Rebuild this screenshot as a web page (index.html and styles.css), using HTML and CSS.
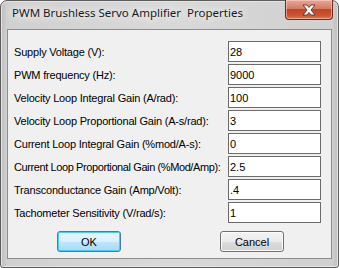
FILE: index.html
```html
<!DOCTYPE html>
<html lang="en">
<head>
    <meta charset="UTF-8">
    <title>PWM Brushless Servo Amplifier Properties</title>
    <link rel="stylesheet" href="styles.css">
</head>
<body>
    <div class="window">
        <div class="titlebar">
            <span class="title">PWM Brushless Servo Amplifier&nbsp; Properties</span>
            <button class="close-btn" aria-label="Close">
                <svg viewBox="0 0 16 12" width="16" height="12">
                    <path d="M2 1h4l2 2.5L10 1h4l-4 5 4 5h-4l-2-2.5L6 11H2l4-5z" fill="#fff" stroke="#5a3028" stroke-width="0.9" stroke-linejoin="round"/>
                </svg>
            </button>
        </div>
        <div class="client">
            <div class="fields">
                <div class="row">
                    <label class="label">Supply Voltage (V):</label>
                    <input class="field" type="text" value="28">
                </div>
                <div class="row">
                    <label class="label">PWM frequency (Hz):</label>
                    <input class="field" type="text" value="9000">
                </div>
                <div class="row">
                    <label class="label">Velocity Loop Integral Gain (A/rad):</label>
                    <input class="field" type="text" value="100">
                </div>
                <div class="row">
                    <label class="label">Velocity Loop Proportional Gain (A-s/rad):</label>
                    <input class="field" type="text" value="3">
                </div>
                <div class="row">
                    <label class="label">Current Loop Integral Gain (%mod/A-s):</label>
                    <input class="field" type="text" value="0">
                </div>
                <div class="row">
                    <label class="label label-tight">Current Loop Proportional Gain (%Mod/Amp):</label>
                    <input class="field" type="text" value="2.5">
                </div>
                <div class="row">
                    <label class="label">Transconductance Gain (Amp/Volt):</label>
                    <input class="field" type="text" value=".4">
                </div>
                <div class="row">
                    <label class="label">Tachometer Sensitivity (V/rad/s):</label>
                    <input class="field" type="text" value="1">
                </div>
            </div>
            <div class="buttons">
                <button class="btn btn-default">OK</button>
                <button class="btn">Cancel</button>
            </div>
        </div>
    </div>
</body>
</html>
```

FILE: styles.css
```css
* {
    margin: 0;
    padding: 0;
    box-sizing: border-box;
}

body {
    width: 339px;
    height: 268px;
    overflow: hidden;
    background: #fff;
}

.window {
    width: 339px;
    height: 268px;
    border: 1px solid #5c5c5c;
    border-radius: 7px 7px 3px 3px;
    background: linear-gradient(to right, #bdbdbd 0, #d0d0d0 6px, #d9d9d9 50%, #d0d0d0 calc(100% - 6px), #bdbdbd 100%);
    box-shadow: inset 0 0 0 1px #e6e6e6;
    display: flex;
    flex-direction: column;
    padding: 0 6px 8px 6px;
}

/* Title bar */
.titlebar {
    height: 28px;
    position: relative;
    display: flex;
    align-items: flex-start;
}

.title {
    font-family: 'Noto Sans', sans-serif;
    font-size: 11.5px;
    color: #1a1a1a;
    margin: 4px 0 0 5px;
    text-shadow: 0 0 8px #fff, 0 0 10px #fff;
    white-space: nowrap;
}

.close-btn {
    position: absolute;
    top: -1px;
    right: -1px;
    width: 48px;
    height: 20px;
    border: 1px solid #6e2a1d;
    border-top: none;
    border-radius: 0 0 4px 4px;
    background: linear-gradient(to bottom, #e6a998 0, #d57b63 45%, #c24528 50%, #c9532f 80%, #de7b4f 100%);
    box-shadow: inset 0 0 0 1px rgba(255, 220, 210, 0.5);
    display: flex;
    align-items: center;
    justify-content: center;
}

/* Client area */
.client {
    flex: 1;
    border: 1px solid #8c8c8c;
    background: #f0f0f0;
    padding: 11px 9px 0 6px;
    display: flex;
    flex-direction: column;
}

.fields {
    display: flex;
    flex-direction: column;
    gap: 2px;
}

.row {
    display: flex;
    align-items: center;
    height: 21px;
}

.label {
    width: 214px;
    font-family: 'Liberation Sans', Arial, sans-serif;
    font-size: 11px;
    color: #000;
    white-space: nowrap;
    letter-spacing: -0.2px;
}

.label-tight {
    letter-spacing: -0.4px;
}

.field {
    width: 93px;
    height: 21px;
    border: 1px solid #6b6b6b;
    background: #fff;
    font-family: 'Liberation Sans', Arial, sans-serif;
    font-size: 11px;
    color: #000;
    padding: 1px 1px 0 1px;
    outline: none;
}

.buttons {
    display: flex;
    margin-top: 8px;
    padding-left: 43px;
    gap: 99px;
}

.btn {
    width: 64px;
    height: 21px;
    font-family: 'Liberation Sans', Arial, sans-serif;
    font-size: 11px;
    color: #000;
    border: 1px solid #707070;
    border-radius: 3px;
    background: linear-gradient(to bottom, #f2f2f2 0, #ebebeb 50%, #dddddd 51%, #cfcfcf 100%);
    box-shadow: inset 0 0 0 1px #fcfcfc;
}

.btn-default {
    border-color: #3c7fb1;
    background: linear-gradient(to bottom, #eaf6fd 0, #d9f0fc 50%, #bee6fd 51%, #a7d9f5 100%);
    box-shadow: inset 0 0 0 1px #48cbf4;
}
```
